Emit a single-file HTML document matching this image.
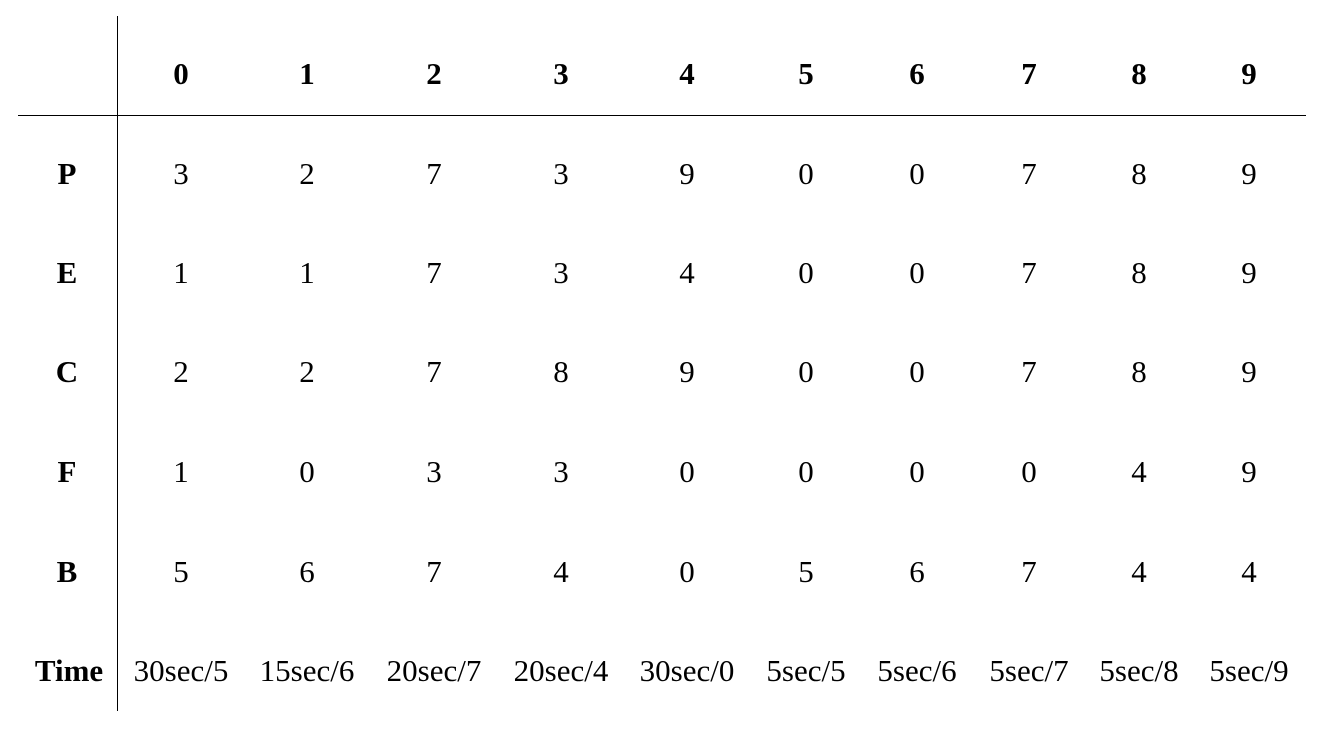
<!DOCTYPE html>
<html><head><style>
html,body{margin:0;padding:0;background:#fff;}
body{width:1324px;height:730px;position:relative;overflow:hidden;font-family:"Liberation Serif",serif;font-size:31px;color:#000;}
.t{position:absolute;width:200px;margin-left:-100px;text-align:center;line-height:30px;margin-top:-14px;white-space:nowrap;}
.b{font-weight:bold;}
.vl{position:absolute;left:117px;top:16px;width:1px;height:695px;background:#000;}
.hl{position:absolute;left:18px;top:115px;width:1288px;height:1px;background:#000;}
</style></head><body>
<div class="vl"></div><div class="hl"></div>
<div id="c"></div>
<script>
var xs=[181,307,434,561,687,806,917,1029,1139,1249];
var ys=[73,173,272,371,471,571,670];
var labels=["","P","E","C","F","B","Time"];
var data=[
["0","1","2","3","4","5","6","7","8","9"],
["3","2","7","3","9","0","0","7","8","9"],
["1","1","7","3","4","0","0","7","8","9"],
["2","2","7","8","9","0","0","7","8","9"],
["1","0","3","3","0","0","0","0","4","9"],
["5","6","7","4","0","5","6","7","4","4"],
["30sec/5","15sec/6","20sec/7","20sec/4","30sec/0","5sec/5","5sec/6","5sec/7","5sec/8","5sec/9"]];
var h="";
for(var r=0;r<7;r++){
 if(labels[r])h+='<div class="t b" style="left:'+(r==6?69:67)+'px;top:'+ys[r]+'px">'+labels[r]+'</div>';
 for(var c=0;c<10;c++)h+='<div class="t'+(r==0?' b':'')+'" style="left:'+xs[c]+'px;top:'+ys[r]+'px">'+data[r][c]+'</div>';
}
document.getElementById("c").innerHTML=h;
</script>
</body></html>
